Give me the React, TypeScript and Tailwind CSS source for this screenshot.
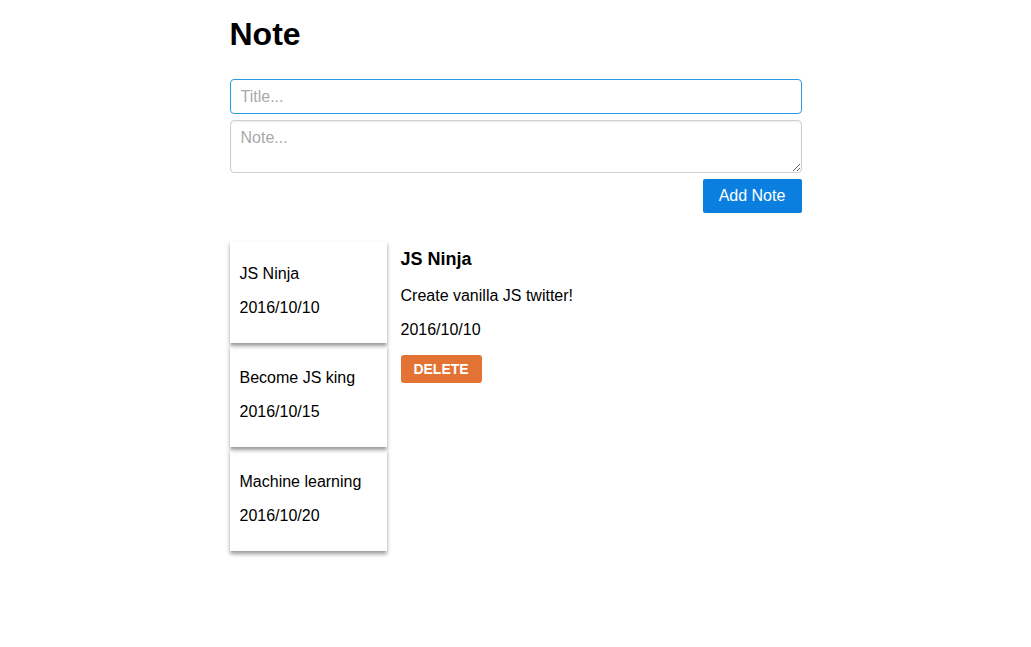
import React from "react";

const notes = [
  { title: "JS Ninja", date: "2016/10/10", z: "z-[3]" },
  { title: "Become JS king", date: "2016/10/15", z: "z-[2]" },
  { title: "Machine learning", date: "2016/10/20", z: "z-[1]" },
];

export default function App() {
  return (
    <div className="min-h-[647px] w-full bg-white text-black" style={{ fontFamily: '"Liberation Sans", Arial, sans-serif' }}>
      <div className="mx-auto w-[572px] pt-[16px]">
        <h1 className="text-[32px] font-bold leading-[37px]">Note</h1>
        <div className="mt-[26px] flex flex-col">
          <input
            autoFocus
            placeholder="Title..."
            className="h-[35px] w-full rounded-[4px] border border-[#2a9be0] px-[10px] text-[16px] text-black caret-black outline-none placeholder:text-[#a9a9a9]"
          />
          <textarea
            placeholder="Note..."
            className="mt-[6px] h-[53px] w-full rounded-[4px] border border-[#cfcfcf] px-[10px] py-[5px] text-[16px] outline-none placeholder:text-[#a9a9a9] shadow-[inset_0_1px_2px_rgba(0,0,0,0.08)]"
          />
          <div className="mt-[6px] flex justify-end">
            <button className="h-[34px] w-[99px] rounded-[2px] bg-[#0a7fe0] text-[16px] text-white">Add Note</button>
          </div>
        </div>
        <div className="mt-[28px] flex items-start">
          <div className="flex w-[157px] flex-col gap-[2px]">
            {notes.map((n) => (
              <div key={n.title} className={`relative ${n.z} h-[102px] bg-white px-[10px] pt-[24px] shadow-[0_3px_4px_rgba(0,0,0,0.4)]`}>
                <p className="text-[16px] leading-[18px]">{n.title}</p>
                <p className="mt-[16px] text-[16px] leading-[18px]">{n.date}</p>
              </div>
            ))}
          </div>
          <div className="ml-[14px] pt-[8px]">
            <h2 className="text-[18px] font-bold leading-[21px]">JS Ninja</h2>
            <p className="mt-[17px] text-[16px] leading-[18px]">Create vanilla JS twitter!</p>
            <p className="mt-[16px] text-[16px] leading-[18px]">2016/10/10</p>
            <button className="mt-[16px] h-[28px] w-[81px] rounded-[3px] bg-[#e37334] text-[14px] font-bold text-white">DELETE</button>
          </div>
        </div>
      </div>
    </div>
  );
}
